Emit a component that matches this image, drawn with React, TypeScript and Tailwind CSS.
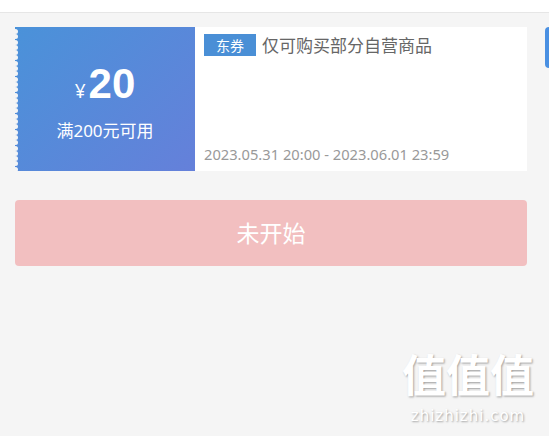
const dots = Array.from({length: 27});

function App() {
  return (
    <main className="relative h-[436px] w-[549px] overflow-hidden bg-[#f5f5f5] font-['Noto_Sans','Noto_Sans_CJK_SC',sans-serif]">
      <div className="h-[13px] border-b border-[#e6e6e6] bg-white"/>

      <section className="flex gap-[18px] pl-[15px] pt-[14px]">
        <div className="flex h-[144px] w-[512px] shrink-0">
          <div className="relative flex w-[180px] flex-col items-center justify-center bg-[linear-gradient(135deg,#4a92d9,#6580da)] text-white">
            <div className="absolute left-[-2px] top-[2px] flex flex-col gap-[0.3px]">
              {dots.map((_, i) => (
                <span key={i} className="block h-[5px] w-[5px] rounded-full bg-[#f5f5f5]"/>
              ))}
            </div>
            <div className="mt-[4px] flex items-baseline">
              <span className="mr-[3px] text-[19px] leading-none">¥</span>
              <span className="text-[42px] font-bold leading-none font-['Liberation_Sans',sans-serif]">20</span>
            </div>
            <p className="mt-[17px] text-[17px] leading-none">满200元可用</p>
          </div>
          <div className="flex flex-1 flex-col justify-between bg-white pb-[9px] pl-[9px] pt-[7px]">
            <div className="flex items-center">
              <span className="flex h-[22px] w-[52px] items-center justify-center bg-[#4a8fd6] text-[14px] text-white">东券</span>
              <span className="ml-[6px] text-[17px] leading-none text-[#666]">仅可购买部分自营商品</span>
            </div>
            <p className="text-[14.7px] leading-none text-[#999]">2023.05.31 20:00 - 2023.06.01 23:59</p>
          </div>
        </div>
        <div className="h-[41px] w-[20px] shrink-0 rounded-l-[4px] bg-[#4a90e2]"/>
      </section>

      <div className="ml-[15px] mt-[29px] flex h-[66px] w-[512px] items-center justify-center rounded-[4px] bg-[#f2bfc0] text-[23px] text-white">
        未开始
      </div>

      <div className="absolute bottom-[12px] right-[11px] flex w-[140px] flex-col items-center text-white [text-shadow:1px_1px_2px_rgba(0,0,0,0.35)]">
        <span className="text-[44px] font-bold leading-[44px] tracking-[0px] font-['Noto_Sans_CJK_SC',sans-serif]">值值值</span>
        <span className="mt-[14px] text-[15px] leading-none tracking-[1px] font-['DejaVu_Sans',sans-serif]">zhizhizhi.com</span>
      </div>
    </main>
  )
}

export default App
